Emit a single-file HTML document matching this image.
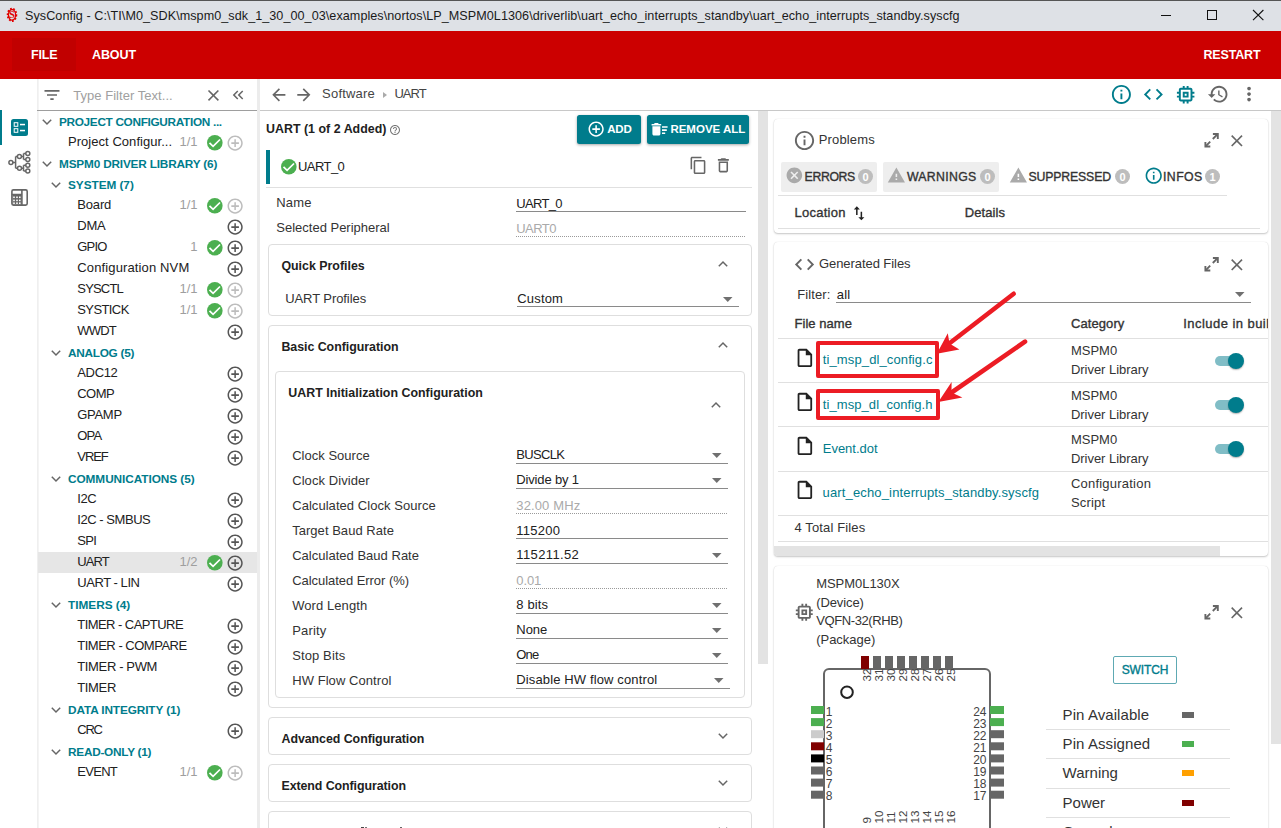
<!DOCTYPE html>
<html><head><meta charset="utf-8"><style>
html,body{margin:0;padding:0;width:1281px;height:828px;overflow:hidden;background:#fff;font-family:"Liberation Sans",sans-serif;}
.a{position:absolute;white-space:nowrap;}
svg.a{overflow:visible}
</style></head><body>
<div class="a" style="left:0px;top:0px;width:1281px;height:31px;background:#dee1e6"></div>
<div class="a" style="left:0px;top:0px;width:1281px;height:1px;background:#555"></div>
<svg class="a" style="left:6px;top:7px;" width="12" height="16" viewBox="0 0 12 16"><g fill="none" stroke="#e00000"><ellipse cx="6" cy="7.8" rx="4.3" ry="6.2" stroke-width="1.9" stroke-dasharray="1.7 1.5"/><ellipse cx="6" cy="7.8" rx="3.6" ry="5.3" stroke-width="1.3"/></g><text x="6" y="11.4" text-anchor="middle" font-family="Liberation Serif" font-size="10.5" fill="#e00000" font-weight="bold">S</text></svg>
<div class="a" style="left:25px;top:10.00px;font-size:12.6px;line-height:12.6px;font-weight:400;color:#1a1a1a;letter-spacing:0.058px;">SysConfig - C:\TI\M0_SDK\mspm0_sdk_1_30_00_03\examples\nortos\LP_MSPM0L1306\driverlib\uart_echo_interrupts_standby\uart_echo_interrupts_standby.syscfg</div>
<div class="a" style="left:1161px;top:15px;width:10px;height:1px;background:#111"></div>
<div class="a" style="left:1207px;top:10px;width:10px;height:10px;border:1.2px solid #111;box-sizing:border-box"></div>
<svg class="a" style="left:1252.8px;top:9.9px;" width="10.4" height="10.2" viewBox="0 0 10.4 10.2"><path d="M0 0L10.4 10.2M10.4 0L0 10.2" stroke="#111" stroke-width="1.1"/></svg>
<div class="a" style="left:0px;top:31px;width:1281px;height:48px;background:#cc0000"></div>
<div class="a" style="left:12px;top:38px;width:64px;height:33px;background:#c10000"></div>
<div class="a" style="left:31px;top:49.00px;font-size:12.5px;line-height:12.5px;font-weight:700;color:#fff;letter-spacing:-0.166px;">FILE</div>
<div class="a" style="left:92px;top:49.00px;font-size:12.5px;line-height:12.5px;font-weight:700;color:#fff;letter-spacing:-0.098px;">ABOUT</div>
<div class="a" style="left:1203.5px;top:49.00px;font-size:12.5px;line-height:12.5px;font-weight:700;color:#fff;letter-spacing:-0.169px;">RESTART</div>
<div class="a" style="left:0px;top:110px;width:2px;height:35px;background:#007c8c"></div>
<svg class="a" style="left:11px;top:119px;" width="17" height="17" viewBox="0 0 17 17"><rect x="0" y="0" width="17" height="17" rx="2.5" fill="#007c8c"/><rect x="3.2" y="3.7" width="3.6" height="3.6" fill="none" stroke="#fff" stroke-width="1"/><rect x="3.2" y="9.7" width="3.6" height="3.6" fill="none" stroke="#fff" stroke-width="1"/><rect x="9" y="4.8" width="5" height="1.5" fill="#fff"/><rect x="9" y="10.8" width="5" height="1.5" fill="#fff"/></svg>
<svg class="a" style="left:8px;top:150px;" width="24" height="24" viewBox="0 0 24 24"><g fill="none" stroke="#666" stroke-width="1.5"><circle cx="2.9" cy="12.4" r="2"/><circle cx="11.4" cy="6.6" r="2"/><circle cx="11.5" cy="18.2" r="2"/><circle cx="19.8" cy="3.6" r="2"/><circle cx="19.8" cy="9.5" r="2"/><circle cx="19.8" cy="15.3" r="2"/><circle cx="19.8" cy="20.9" r="2"/><path d="M4.9 12.4H7.6M7.6 6.6V18.2M7.6 6.6H9.4M7.6 18.2H9.5M13.4 6.6H15.5M15.5 3.6V9.5M15.5 3.6H17.8M15.5 9.5H17.8M13.5 18.2H15.5M15.5 15.3V20.9M15.5 15.3H17.8M15.5 20.9H17.8"/></g></svg>
<svg class="a" style="left:11px;top:189px;" width="17" height="17" viewBox="0 0 17 17"><rect x="1.5" y="6" width="9" height="9.5" fill="#666"/><g fill="#fff"><rect x="2.2" y="7.5" width="1.6" height="1.6"/><rect x="5.2" y="7.5" width="1.6" height="1.6"/><rect x="8" y="7.5" width="1.6" height="1.6"/><rect x="2.2" y="10.6" width="1.6" height="1.6"/><rect x="5.2" y="10.6" width="1.6" height="1.6"/><rect x="8" y="10.6" width="1.6" height="1.6"/><rect x="2.2" y="13.4" width="1.6" height="1.6"/><rect x="5.2" y="13.4" width="1.6" height="1.6"/><rect x="8" y="13.4" width="1.6" height="1.6"/></g><g fill="none" stroke="#666" stroke-width="1.6"><rect x="0.9" y="0.9" width="15.3" height="15.2" rx="1.5"/><path d="M10.9 0.9V16.1M0.9 5.5H10.9"/></g></svg>
<div class="a" style="left:37px;top:79px;width:2px;height:749px;background:linear-gradient(90deg,#ececec,#f7f7f7)"></div>
<div class="a" style="left:257px;top:79px;width:3px;height:749px;background:#ececec"></div>
<div class="a" style="left:37px;top:110px;width:220px;height:1px;background:#9e9e9e"></div>
<svg class="a" style="left:42.40px;top:85.20px;" width="19.99" height="19.99" viewBox="0 0 24 24"><path d="M10 18h4v-2h-4v2zM3 6v2h18V6H3zm3 7h12v-2H6v2z" fill="#666"/></svg>
<div class="a" style="left:73.2px;top:89.00px;font-size:13px;line-height:13px;font-weight:400;color:#a0a0a0;letter-spacing:0.042px;">Type Filter Text...</div>
<svg class="a" style="left:204.17px;top:86.07px;" width="18.86" height="18.86" viewBox="0 0 24 24"><path d="M19 6.41L17.59 5 12 10.59 6.41 5 5 6.41 10.59 12 5 17.59 6.41 19 12 13.41 17.59 19 19 17.59 13.41 12z" fill="#666"/></svg>
<svg class="a" style="left:229.30px;top:86.40px;" width="18.00" height="18.00" viewBox="0 0 24 24"><path d="M17.59 18L19 16.59 14.42 12 19 7.41 17.59 6l-6 6zM11 18l1.41-1.41L7.83 12l4.58-4.59L11 6l-6 6z" fill="#666"/></svg>
<svg class="a" style="left:42px;top:119px;" width="10" height="6" viewBox="0 0 10 6"><path d="M0.8 0.8L5 5L9.2 0.8" fill="none" stroke="#666" stroke-width="1.5"/></svg>
<div class="a" style="left:59px;top:117.00px;font-size:11.8px;line-height:11.8px;font-weight:700;color:#007c8c;letter-spacing:-0.322px;">PROJECT CONFIGURATION ...</div>
<div class="a" style="left:68px;top:135.00px;font-size:13px;line-height:13px;font-weight:400;color:#212121;letter-spacing:0.042px;">Project Configur...</div>
<div class="a" style="right:1083.5px;top:135.00px;font-size:13px;line-height:13px;color:#9e9e9e">1/1</div>
<svg class="a" style="left:206.6px;top:134.54999999999998px;" width="15.6" height="15.6" viewBox="0 0 15.6 15.6"><circle cx="7.8" cy="7.8" r="7.8" fill="#4caf50"/><path d="M2.50 7.80L6.10 11.30L13.00 4.50" fill="none" stroke="#fff" stroke-width="1.75"/></svg>
<svg class="a" style="left:226.28px;top:133.68px;" width="18.24" height="18.24" viewBox="0 0 24 24"><path d="M13 7h-2v4H7v2h4v4h2v-4h4v-2h-4V7zm-1-5C6.48 2 2 6.48 2 12s4.48 10 10 10 10-4.48 10-10S17.52 2 12 2zm0 18c-4.41 0-8-3.59-8-8s3.59-8 8-8 8 3.59 8 8-3.59 8-8 8z" fill="#bdbdbd"/></svg>
<svg class="a" style="left:42px;top:161px;" width="10" height="6" viewBox="0 0 10 6"><path d="M0.8 0.8L5 5L9.2 0.8" fill="none" stroke="#666" stroke-width="1.5"/></svg>
<div class="a" style="left:59px;top:159.00px;font-size:11.8px;line-height:11.8px;font-weight:700;color:#007c8c;letter-spacing:-0.183px;">MSPM0 DRIVER LIBRARY (6)</div>
<svg class="a" style="left:51px;top:182px;" width="10" height="6" viewBox="0 0 10 6"><path d="M0.8 0.8L5 5L9.2 0.8" fill="none" stroke="#666" stroke-width="1.5"/></svg>
<div class="a" style="left:68px;top:180.00px;font-size:11.8px;line-height:11.8px;font-weight:700;color:#007c8c;letter-spacing:-0.044px;">SYSTEM (7)</div>
<div class="a" style="left:77.3px;top:198.00px;font-size:13px;line-height:13px;font-weight:400;color:#212121;letter-spacing:-0.175px;">Board</div>
<div class="a" style="right:1083.5px;top:198.00px;font-size:13px;line-height:13px;color:#9e9e9e">1/1</div>
<svg class="a" style="left:206.6px;top:197.54999999999998px;" width="15.6" height="15.6" viewBox="0 0 15.6 15.6"><circle cx="7.8" cy="7.8" r="7.8" fill="#4caf50"/><path d="M2.50 7.80L6.10 11.30L13.00 4.50" fill="none" stroke="#fff" stroke-width="1.75"/></svg>
<svg class="a" style="left:226.28px;top:196.68px;" width="18.24" height="18.24" viewBox="0 0 24 24"><path d="M13 7h-2v4H7v2h4v4h2v-4h4v-2h-4V7zm-1-5C6.48 2 2 6.48 2 12s4.48 10 10 10 10-4.48 10-10S17.52 2 12 2zm0 18c-4.41 0-8-3.59-8-8s3.59-8 8-8 8 3.59 8 8-3.59 8-8 8z" fill="#bdbdbd"/></svg>
<div class="a" style="left:77.3px;top:219.00px;font-size:13px;line-height:13px;font-weight:400;color:#212121;letter-spacing:-0.235px;">DMA</div>
<svg class="a" style="left:226.28px;top:217.68px;" width="18.24" height="18.24" viewBox="0 0 24 24"><path d="M13 7h-2v4H7v2h4v4h2v-4h4v-2h-4V7zm-1-5C6.48 2 2 6.48 2 12s4.48 10 10 10 10-4.48 10-10S17.52 2 12 2zm0 18c-4.41 0-8-3.59-8-8s3.59-8 8-8 8 3.59 8 8-3.59 8-8 8z" fill="#555"/></svg>
<div class="a" style="left:77.3px;top:240.00px;font-size:13px;line-height:13px;font-weight:400;color:#212121;letter-spacing:-0.830px;">GPIO</div>
<div class="a" style="right:1083.5px;top:240.00px;font-size:13px;line-height:13px;color:#9e9e9e">1</div>
<svg class="a" style="left:206.6px;top:239.54999999999998px;" width="15.6" height="15.6" viewBox="0 0 15.6 15.6"><circle cx="7.8" cy="7.8" r="7.8" fill="#4caf50"/><path d="M2.50 7.80L6.10 11.30L13.00 4.50" fill="none" stroke="#fff" stroke-width="1.75"/></svg>
<svg class="a" style="left:226.28px;top:238.68px;" width="18.24" height="18.24" viewBox="0 0 24 24"><path d="M13 7h-2v4H7v2h4v4h2v-4h4v-2h-4V7zm-1-5C6.48 2 2 6.48 2 12s4.48 10 10 10 10-4.48 10-10S17.52 2 12 2zm0 18c-4.41 0-8-3.59-8-8s3.59-8 8-8 8 3.59 8 8-3.59 8-8 8z" fill="#555"/></svg>
<div class="a" style="left:77.3px;top:261.00px;font-size:13px;line-height:13px;font-weight:400;color:#212121;letter-spacing:0.132px;">Configuration NVM</div>
<svg class="a" style="left:226.28px;top:259.68px;" width="18.24" height="18.24" viewBox="0 0 24 24"><path d="M13 7h-2v4H7v2h4v4h2v-4h4v-2h-4V7zm-1-5C6.48 2 2 6.48 2 12s4.48 10 10 10 10-4.48 10-10S17.52 2 12 2zm0 18c-4.41 0-8-3.59-8-8s3.59-8 8-8 8 3.59 8 8-3.59 8-8 8z" fill="#555"/></svg>
<div class="a" style="left:77.3px;top:282.00px;font-size:13px;line-height:13px;font-weight:400;color:#212121;letter-spacing:-0.813px;">SYSCTL</div>
<div class="a" style="right:1083.5px;top:282.00px;font-size:13px;line-height:13px;color:#9e9e9e">1/1</div>
<svg class="a" style="left:206.6px;top:281.55px;" width="15.6" height="15.6" viewBox="0 0 15.6 15.6"><circle cx="7.8" cy="7.8" r="7.8" fill="#4caf50"/><path d="M2.50 7.80L6.10 11.30L13.00 4.50" fill="none" stroke="#fff" stroke-width="1.75"/></svg>
<svg class="a" style="left:226.28px;top:280.68px;" width="18.24" height="18.24" viewBox="0 0 24 24"><path d="M13 7h-2v4H7v2h4v4h2v-4h4v-2h-4V7zm-1-5C6.48 2 2 6.48 2 12s4.48 10 10 10 10-4.48 10-10S17.52 2 12 2zm0 18c-4.41 0-8-3.59-8-8s3.59-8 8-8 8 3.59 8 8-3.59 8-8 8z" fill="#bdbdbd"/></svg>
<div class="a" style="left:77.3px;top:303.00px;font-size:13px;line-height:13px;font-weight:400;color:#212121;letter-spacing:-0.604px;">SYSTICK</div>
<div class="a" style="right:1083.5px;top:303.00px;font-size:13px;line-height:13px;color:#9e9e9e">1/1</div>
<svg class="a" style="left:206.6px;top:302.55px;" width="15.6" height="15.6" viewBox="0 0 15.6 15.6"><circle cx="7.8" cy="7.8" r="7.8" fill="#4caf50"/><path d="M2.50 7.80L6.10 11.30L13.00 4.50" fill="none" stroke="#fff" stroke-width="1.75"/></svg>
<svg class="a" style="left:226.28px;top:301.68px;" width="18.24" height="18.24" viewBox="0 0 24 24"><path d="M13 7h-2v4H7v2h4v4h2v-4h4v-2h-4V7zm-1-5C6.48 2 2 6.48 2 12s4.48 10 10 10 10-4.48 10-10S17.52 2 12 2zm0 18c-4.41 0-8-3.59-8-8s3.59-8 8-8 8 3.59 8 8-3.59 8-8 8z" fill="#bdbdbd"/></svg>
<div class="a" style="left:77.3px;top:324.00px;font-size:13px;line-height:13px;font-weight:400;color:#212121;letter-spacing:-0.820px;">WWDT</div>
<svg class="a" style="left:226.28px;top:322.68px;" width="18.24" height="18.24" viewBox="0 0 24 24"><path d="M13 7h-2v4H7v2h4v4h2v-4h4v-2h-4V7zm-1-5C6.48 2 2 6.48 2 12s4.48 10 10 10 10-4.48 10-10S17.52 2 12 2zm0 18c-4.41 0-8-3.59-8-8s3.59-8 8-8 8 3.59 8 8-3.59 8-8 8z" fill="#555"/></svg>
<svg class="a" style="left:51px;top:350px;" width="10" height="6" viewBox="0 0 10 6"><path d="M0.8 0.8L5 5L9.2 0.8" fill="none" stroke="#666" stroke-width="1.5"/></svg>
<div class="a" style="left:68px;top:348.00px;font-size:11.8px;line-height:11.8px;font-weight:700;color:#007c8c;letter-spacing:-0.266px;">ANALOG (5)</div>
<div class="a" style="left:77.3px;top:366.00px;font-size:13px;line-height:13px;font-weight:400;color:#212121;letter-spacing:-0.357px;">ADC12</div>
<svg class="a" style="left:226.28px;top:364.68px;" width="18.24" height="18.24" viewBox="0 0 24 24"><path d="M13 7h-2v4H7v2h4v4h2v-4h4v-2h-4V7zm-1-5C6.48 2 2 6.48 2 12s4.48 10 10 10 10-4.48 10-10S17.52 2 12 2zm0 18c-4.41 0-8-3.59-8-8s3.59-8 8-8 8 3.59 8 8-3.59 8-8 8z" fill="#555"/></svg>
<div class="a" style="left:77.3px;top:387.00px;font-size:13px;line-height:13px;font-weight:400;color:#212121;letter-spacing:-0.571px;">COMP</div>
<svg class="a" style="left:226.28px;top:385.68px;" width="18.24" height="18.24" viewBox="0 0 24 24"><path d="M13 7h-2v4H7v2h4v4h2v-4h4v-2h-4V7zm-1-5C6.48 2 2 6.48 2 12s4.48 10 10 10 10-4.48 10-10S17.52 2 12 2zm0 18c-4.41 0-8-3.59-8-8s3.59-8 8-8 8 3.59 8 8-3.59 8-8 8z" fill="#555"/></svg>
<div class="a" style="left:77.3px;top:408.00px;font-size:13px;line-height:13px;font-weight:400;color:#212121;letter-spacing:-0.309px;">GPAMP</div>
<svg class="a" style="left:226.28px;top:406.68px;" width="18.24" height="18.24" viewBox="0 0 24 24"><path d="M13 7h-2v4H7v2h4v4h2v-4h4v-2h-4V7zm-1-5C6.48 2 2 6.48 2 12s4.48 10 10 10 10-4.48 10-10S17.52 2 12 2zm0 18c-4.41 0-8-3.59-8-8s3.59-8 8-8 8 3.59 8 8-3.59 8-8 8z" fill="#555"/></svg>
<div class="a" style="left:77.3px;top:429.00px;font-size:13px;line-height:13px;font-weight:400;color:#212121;letter-spacing:-0.796px;">OPA</div>
<svg class="a" style="left:226.28px;top:427.68px;" width="18.24" height="18.24" viewBox="0 0 24 24"><path d="M13 7h-2v4H7v2h4v4h2v-4h4v-2h-4V7zm-1-5C6.48 2 2 6.48 2 12s4.48 10 10 10 10-4.48 10-10S17.52 2 12 2zm0 18c-4.41 0-8-3.59-8-8s3.59-8 8-8 8 3.59 8 8-3.59 8-8 8z" fill="#555"/></svg>
<div class="a" style="left:77.3px;top:450.00px;font-size:13px;line-height:13px;font-weight:400;color:#212121;letter-spacing:-1.078px;">VREF</div>
<svg class="a" style="left:226.28px;top:448.68px;" width="18.24" height="18.24" viewBox="0 0 24 24"><path d="M13 7h-2v4H7v2h4v4h2v-4h4v-2h-4V7zm-1-5C6.48 2 2 6.48 2 12s4.48 10 10 10 10-4.48 10-10S17.52 2 12 2zm0 18c-4.41 0-8-3.59-8-8s3.59-8 8-8 8 3.59 8 8-3.59 8-8 8z" fill="#555"/></svg>
<svg class="a" style="left:51px;top:476px;" width="10" height="6" viewBox="0 0 10 6"><path d="M0.8 0.8L5 5L9.2 0.8" fill="none" stroke="#666" stroke-width="1.5"/></svg>
<div class="a" style="left:68px;top:474.00px;font-size:11.8px;line-height:11.8px;font-weight:700;color:#007c8c;letter-spacing:-0.052px;">COMMUNICATIONS (5)</div>
<div class="a" style="left:77.3px;top:492.00px;font-size:13px;line-height:13px;font-weight:400;color:#212121;letter-spacing:-0.412px;">I2C</div>
<svg class="a" style="left:226.28px;top:490.68px;" width="18.24" height="18.24" viewBox="0 0 24 24"><path d="M13 7h-2v4H7v2h4v4h2v-4h4v-2h-4V7zm-1-5C6.48 2 2 6.48 2 12s4.48 10 10 10 10-4.48 10-10S17.52 2 12 2zm0 18c-4.41 0-8-3.59-8-8s3.59-8 8-8 8 3.59 8 8-3.59 8-8 8z" fill="#555"/></svg>
<div class="a" style="left:77.3px;top:513.00px;font-size:13px;line-height:13px;font-weight:400;color:#212121;letter-spacing:-0.458px;">I2C - SMBUS</div>
<svg class="a" style="left:226.28px;top:511.68px;" width="18.24" height="18.24" viewBox="0 0 24 24"><path d="M13 7h-2v4H7v2h4v4h2v-4h4v-2h-4V7zm-1-5C6.48 2 2 6.48 2 12s4.48 10 10 10 10-4.48 10-10S17.52 2 12 2zm0 18c-4.41 0-8-3.59-8-8s3.59-8 8-8 8 3.59 8 8-3.59 8-8 8z" fill="#555"/></svg>
<div class="a" style="left:77.3px;top:534.00px;font-size:13px;line-height:13px;font-weight:400;color:#212121;letter-spacing:-0.702px;">SPI</div>
<svg class="a" style="left:226.28px;top:532.68px;" width="18.24" height="18.24" viewBox="0 0 24 24"><path d="M13 7h-2v4H7v2h4v4h2v-4h4v-2h-4V7zm-1-5C6.48 2 2 6.48 2 12s4.48 10 10 10 10-4.48 10-10S17.52 2 12 2zm0 18c-4.41 0-8-3.59-8-8s3.59-8 8-8 8 3.59 8 8-3.59 8-8 8z" fill="#555"/></svg>
<div class="a" style="left:38px;top:552px;width:219px;height:21px;background:#e6e6e6"></div>
<div class="a" style="left:77.3px;top:555.00px;font-size:13px;line-height:13px;font-weight:400;color:#212121;letter-spacing:-0.958px;">UART</div>
<div class="a" style="right:1083.5px;top:555.00px;font-size:13px;line-height:13px;color:#9e9e9e">1/2</div>
<svg class="a" style="left:206.6px;top:554.5500000000001px;" width="15.6" height="15.6" viewBox="0 0 15.6 15.6"><circle cx="7.8" cy="7.8" r="7.8" fill="#4caf50"/><path d="M2.50 7.80L6.10 11.30L13.00 4.50" fill="none" stroke="#fff" stroke-width="1.75"/></svg>
<svg class="a" style="left:226.28px;top:553.68px;" width="18.24" height="18.24" viewBox="0 0 24 24"><path d="M13 7h-2v4H7v2h4v4h2v-4h4v-2h-4V7zm-1-5C6.48 2 2 6.48 2 12s4.48 10 10 10 10-4.48 10-10S17.52 2 12 2zm0 18c-4.41 0-8-3.59-8-8s3.59-8 8-8 8 3.59 8 8-3.59 8-8 8z" fill="#555"/></svg>
<div class="a" style="left:77.3px;top:576.00px;font-size:13px;line-height:13px;font-weight:400;color:#212121;letter-spacing:-0.452px;">UART - LIN</div>
<svg class="a" style="left:226.28px;top:574.68px;" width="18.24" height="18.24" viewBox="0 0 24 24"><path d="M13 7h-2v4H7v2h4v4h2v-4h4v-2h-4V7zm-1-5C6.48 2 2 6.48 2 12s4.48 10 10 10 10-4.48 10-10S17.52 2 12 2zm0 18c-4.41 0-8-3.59-8-8s3.59-8 8-8 8 3.59 8 8-3.59 8-8 8z" fill="#555"/></svg>
<svg class="a" style="left:51px;top:602px;" width="10" height="6" viewBox="0 0 10 6"><path d="M0.8 0.8L5 5L9.2 0.8" fill="none" stroke="#666" stroke-width="1.5"/></svg>
<div class="a" style="left:68px;top:600.00px;font-size:11.8px;line-height:11.8px;font-weight:700;color:#007c8c;letter-spacing:0.002px;">TIMERS (4)</div>
<div class="a" style="left:77.3px;top:618.00px;font-size:13px;line-height:13px;font-weight:400;color:#212121;letter-spacing:-0.559px;">TIMER - CAPTURE</div>
<svg class="a" style="left:226.28px;top:616.68px;" width="18.24" height="18.24" viewBox="0 0 24 24"><path d="M13 7h-2v4H7v2h4v4h2v-4h4v-2h-4V7zm-1-5C6.48 2 2 6.48 2 12s4.48 10 10 10 10-4.48 10-10S17.52 2 12 2zm0 18c-4.41 0-8-3.59-8-8s3.59-8 8-8 8 3.59 8 8-3.59 8-8 8z" fill="#555"/></svg>
<div class="a" style="left:77.3px;top:639.00px;font-size:13px;line-height:13px;font-weight:400;color:#212121;letter-spacing:-0.494px;">TIMER - COMPARE</div>
<svg class="a" style="left:226.28px;top:637.68px;" width="18.24" height="18.24" viewBox="0 0 24 24"><path d="M13 7h-2v4H7v2h4v4h2v-4h4v-2h-4V7zm-1-5C6.48 2 2 6.48 2 12s4.48 10 10 10 10-4.48 10-10S17.52 2 12 2zm0 18c-4.41 0-8-3.59-8-8s3.59-8 8-8 8 3.59 8 8-3.59 8-8 8z" fill="#555"/></svg>
<div class="a" style="left:77.3px;top:660.00px;font-size:13px;line-height:13px;font-weight:400;color:#212121;letter-spacing:-0.368px;">TIMER - PWM</div>
<svg class="a" style="left:226.28px;top:658.68px;" width="18.24" height="18.24" viewBox="0 0 24 24"><path d="M13 7h-2v4H7v2h4v4h2v-4h4v-2h-4V7zm-1-5C6.48 2 2 6.48 2 12s4.48 10 10 10 10-4.48 10-10S17.52 2 12 2zm0 18c-4.41 0-8-3.59-8-8s3.59-8 8-8 8 3.59 8 8-3.59 8-8 8z" fill="#555"/></svg>
<div class="a" style="left:77.3px;top:681.00px;font-size:13px;line-height:13px;font-weight:400;color:#212121;letter-spacing:-0.364px;">TIMER</div>
<svg class="a" style="left:226.28px;top:679.68px;" width="18.24" height="18.24" viewBox="0 0 24 24"><path d="M13 7h-2v4H7v2h4v4h2v-4h4v-2h-4V7zm-1-5C6.48 2 2 6.48 2 12s4.48 10 10 10 10-4.48 10-10S17.52 2 12 2zm0 18c-4.41 0-8-3.59-8-8s3.59-8 8-8 8 3.59 8 8-3.59 8-8 8z" fill="#555"/></svg>
<svg class="a" style="left:51px;top:707px;" width="10" height="6" viewBox="0 0 10 6"><path d="M0.8 0.8L5 5L9.2 0.8" fill="none" stroke="#666" stroke-width="1.5"/></svg>
<div class="a" style="left:68px;top:705.00px;font-size:11.8px;line-height:11.8px;font-weight:700;color:#007c8c;letter-spacing:-0.113px;">DATA INTEGRITY (1)</div>
<div class="a" style="left:77.3px;top:723.00px;font-size:13px;line-height:13px;font-weight:400;color:#212121;letter-spacing:-1.306px;">CRC</div>
<svg class="a" style="left:226.28px;top:721.68px;" width="18.24" height="18.24" viewBox="0 0 24 24"><path d="M13 7h-2v4H7v2h4v4h2v-4h4v-2h-4V7zm-1-5C6.48 2 2 6.48 2 12s4.48 10 10 10 10-4.48 10-10S17.52 2 12 2zm0 18c-4.41 0-8-3.59-8-8s3.59-8 8-8 8 3.59 8 8-3.59 8-8 8z" fill="#555"/></svg>
<svg class="a" style="left:51px;top:749px;" width="10" height="6" viewBox="0 0 10 6"><path d="M0.8 0.8L5 5L9.2 0.8" fill="none" stroke="#666" stroke-width="1.5"/></svg>
<div class="a" style="left:68px;top:747.00px;font-size:11.8px;line-height:11.8px;font-weight:700;color:#007c8c;letter-spacing:-0.252px;">READ-ONLY (1)</div>
<div class="a" style="left:77.3px;top:765.00px;font-size:13px;line-height:13px;font-weight:400;color:#212121;letter-spacing:-0.721px;">EVENT</div>
<div class="a" style="right:1083.5px;top:765.00px;font-size:13px;line-height:13px;color:#9e9e9e">1/1</div>
<svg class="a" style="left:206.6px;top:764.5500000000001px;" width="15.6" height="15.6" viewBox="0 0 15.6 15.6"><circle cx="7.8" cy="7.8" r="7.8" fill="#4caf50"/><path d="M2.50 7.80L6.10 11.30L13.00 4.50" fill="none" stroke="#fff" stroke-width="1.75"/></svg>
<svg class="a" style="left:226.28px;top:763.68px;" width="18.24" height="18.24" viewBox="0 0 24 24"><path d="M13 7h-2v4H7v2h4v4h2v-4h4v-2h-4V7zm-1-5C6.48 2 2 6.48 2 12s4.48 10 10 10 10-4.48 10-10S17.52 2 12 2zm0 18c-4.41 0-8-3.59-8-8s3.59-8 8-8 8 3.59 8 8-3.59 8-8 8z" fill="#bdbdbd"/></svg>
<div class="a" style="left:260px;top:110px;width:1021px;height:1px;background:#c8c8c8"></div>
<svg class="a" style="left:268.80px;top:84.60px;" width="19.68" height="19.68" viewBox="0 0 24 24"><path d="M20 11H7.83l5.59-5.59L12 4l-8 8 8 8 1.41-1.41L7.83 13H20v-2z" fill="#666"/></svg>
<svg class="a" style="left:293.50px;top:84.60px;" width="19.68" height="19.68" viewBox="0 0 24 24"><path d="M12 4l-1.41 1.41L16.17 11H4v2h12.17l-5.58 5.59L12 20l8-8z" fill="#666"/></svg>
<div class="a" style="left:322.1px;top:87.00px;font-size:13px;line-height:13px;font-weight:400;color:#444;letter-spacing:0.200px;">Software</div>
<svg class="a" style="left:383px;top:91.5px;" width="5" height="6" viewBox="0 0 5 6"><path d="M0 0L4 3L0 6Z" fill="#aaa"/></svg>
<div class="a" style="left:394.4px;top:87.00px;font-size:13px;line-height:13px;font-weight:400;color:#444;letter-spacing:-0.958px;">UART</div>
<svg class="a" style="left:1110.00px;top:83.00px;" width="22.80" height="22.80" viewBox="0 0 24 24"><path d="M11 7h2v2h-2zm0 4h2v6h-2zm1-9C6.48 2 2 6.48 2 12s4.48 10 10 10 10-4.48 10-10S17.52 2 12 2zm0 18c-4.41 0-8-3.59-8-8s3.59-8 8-8 8 3.59 8 8-3.59 8-8 8z" fill="#007c8c"/></svg>
<svg class="a" style="left:1142.10px;top:83.30px;" width="22.80" height="22.80" viewBox="0 0 24 24"><path d="M9.4 16.6L4.8 12l4.6-4.6L8 6l-6 6 6 6 1.4-1.4zm5.2 0l4.6-4.6-4.6-4.6L16 6l6 6-6 6-1.4-1.4z" fill="#007c8c"/></svg>
<svg class="a" style="left:1174.00px;top:82.80px;" width="23.33" height="23.33" viewBox="0 0 24 24"><path d="M15 9H9v6h6V9zm-2 4h-2v-2h2v2zm8-2V9h-2V7c0-1.1-.9-2-2-2h-2V3h-2v2h-2V3H9v2H7c-1.1 0-2 .9-2 2v2H3v2h2v2H3v2h2v2c0 1.1.9 2 2 2h2v2h2v-2h2v2h2v-2h2c1.1 0 2-.9 2-2v-2h2v-2h-2v-2h2zm-4 6H7V7h10v10z" fill="#007c8c"/></svg>
<svg class="a" style="left:1206.80px;top:83.00px;" width="22.32" height="22.32" viewBox="0 0 24 24"><path d="M13 3c-4.97 0-9 4.03-9 9H1l3.89 3.89.07.14L9 12H6c0-3.87 3.13-7 7-7s7 3.13 7 7-3.13 7-7 7c-1.93 0-3.68-.79-4.94-2.06l-1.42 1.42C8.27 19.99 10.51 21 13 21c4.97 0 9-4.03 9-9s-4.03-9-9-9zm-1 5v5l4.28 2.54.72-1.21-3.5-2.08V8H12z" fill="#666"/></svg>
<svg class="a" style="left:1238.30px;top:83.30px;" width="22.08" height="22.08" viewBox="0 0 24 24"><path d="M12 8c1.1 0 2-.9 2-2s-.9-2-2-2-2 .9-2 2 .9 2 2 2zm0 2c-1.1 0-2 .9-2 2s.9 2 2 2 2-.9 2-2-.9-2-2-2zm0 6c-1.1 0-2 .9-2 2s.9 2 2 2 2-.9 2-2-.9-2-2-2z" fill="#666"/></svg>
<div class="a" style="left:266px;top:123.00px;font-size:12.4px;line-height:12.4px;font-weight:700;color:#212121;letter-spacing:0.023px;">UART (1 of 2 Added)</div>
<svg class="a" style="left:388.50px;top:124.00px;" width="12.00" height="12.00" viewBox="0 0 24 24"><path d="M11 18h2v-2h-2v2zm1-16C6.48 2 2 6.48 2 12s4.48 10 10 10 10-4.48 10-10S17.52 2 12 2zm0 18c-4.41 0-8-3.59-8-8s3.59-8 8-8 8 3.59 8 8-3.59 8-8 8zm0-14c-2.21 0-4 1.79-4 4h2c0-1.1.9-2 2-2s2 .9 2 2c0 2-3 1.75-3 5h2c0-2.25 3-2.5 3-5 0-2.21-1.79-4-4-4z" fill="#777"/></svg>
<div class="a" style="left:577px;top:115px;width:64px;height:29px;background:#007c8c;border-radius:2.5px;box-shadow:0 1px 3px rgba(0,0,0,0.35)"></div>
<svg class="a" style="left:587.38px;top:120.08px;" width="18.24" height="18.24" viewBox="0 0 24 24"><path d="M13 7h-2v4H7v2h4v4h2v-4h4v-2h-4V7zm-1-5C6.48 2 2 6.48 2 12s4.48 10 10 10 10-4.48 10-10S17.52 2 12 2zm0 18c-4.41 0-8-3.59-8-8s3.59-8 8-8 8 3.59 8 8-3.59 8-8 8z" fill="#fff"/></svg>
<div class="a" style="left:607.2px;top:124.00px;font-size:11.5px;line-height:11.5px;font-weight:700;color:#fff;letter-spacing:-0.166px;">ADD</div>
<div class="a" style="left:647px;top:115px;width:102px;height:29px;background:#007c8c;border-radius:2.5px;box-shadow:0 1px 3px rgba(0,0,0,0.35)"></div>
<svg class="a" style="left:649.9px;top:120.1px" width="19.2" height="18.7" viewBox="0 0 24 24" preserveAspectRatio="none"><path d="M15 16h4v2h-4zm0-8h7v2h-7zm0 4h6v2h-6zM3 18c0 1.1.9 2 2 2h6c1.1 0 2-.9 2-2V8H3v10zM14 5h-3l-1-1H6L5 5H2v2h12z" fill="#fff"/></svg>
<div class="a" style="left:670.4px;top:124.00px;font-size:11.5px;line-height:11.5px;font-weight:700;color:#fff;letter-spacing:0.004px;">REMOVE ALL</div>
<div class="a" style="left:266px;top:150px;width:4px;height:34px;background:#007c8c"></div>
<svg class="a" style="left:280.59999999999997px;top:158.79999999999998px;" width="15.6" height="15.6" viewBox="0 0 15.6 15.6"><circle cx="7.8" cy="7.8" r="7.8" fill="#4caf50"/><path d="M2.50 7.80L6.10 11.30L13.00 4.50" fill="none" stroke="#fff" stroke-width="1.75"/></svg>
<div class="a" style="left:298px;top:160.00px;font-size:13px;line-height:13px;font-weight:400;color:#212121;letter-spacing:-0.566px;">UART_0</div>
<svg class="a" style="left:688.90px;top:155.90px;" width="18.72" height="18.72" viewBox="0 0 24 24"><path d="M16 1H4c-1.1 0-2 .9-2 2v14h2V3h12V1zm3 4H8c-1.1 0-2 .9-2 2v14c0 1.1.9 2 2 2h11c1.1 0 2-.9 2-2V7c0-1.1-.9-2-2-2zm0 16H8V7h11v14z" fill="#666"/></svg>
<svg class="a" style="left:714.30px;top:156.00px;" width="18.72" height="18.72" viewBox="0 0 24 24"><path d="M6 19c0 1.1.9 2 2 2h8c1.1 0 2-.9 2-2V7H6v12zM8 9h8v10H8V9zm7.5-5l-1-1h-5l-1 1H5v2h14V4z" fill="#666"/></svg>
<div class="a" style="left:266px;top:187px;width:486px;height:1px;background:#e0e0e0"></div>
<div class="a" style="left:276.3px;top:196.00px;font-size:13px;line-height:13px;font-weight:400;color:#333;letter-spacing:0.178px;">Name</div>
<div class="a" style="left:516px;top:211px;width:230px;height:1px;background:#8a8a8a"></div>
<div class="a" style="left:516.3px;top:197.00px;font-size:13px;line-height:13px;font-weight:400;color:#212121;letter-spacing:-0.675px;">UART_0</div>
<div class="a" style="left:276.3px;top:221.00px;font-size:13px;line-height:13px;font-weight:400;color:#333;letter-spacing:-0.003px;">Selected Peripheral</div>
<div class="a" style="left:516px;top:236px;width:230px;height:1px;background:repeating-linear-gradient(90deg,#9a9a9a 0 1px,transparent 1px 2px)"></div>
<div class="a" style="left:516.3px;top:222.00px;font-size:13px;line-height:13px;font-weight:400;color:#aaa;letter-spacing:-0.574px;">UART0</div>
<div class="a" style="left:268px;top:244px;width:484px;height:72px;border:1px solid #dedede;border-radius:4px;box-sizing:border-box;background:#fff"></div>
<div class="a" style="left:281.4px;top:260.00px;font-size:12.4px;line-height:12.4px;font-weight:700;color:#212121;letter-spacing:0.001px;">Quick Profiles</div>
<svg class="a" style="left:718px;top:261px;" width="10" height="6" viewBox="0 0 10 6"><path d="M0.8 5.2L5 1L9.2 5.2" fill="none" stroke="#666" stroke-width="1.5"/></svg>
<div class="a" style="left:285.2px;top:292.00px;font-size:13px;line-height:13px;font-weight:400;color:#333;letter-spacing:-0.078px;">UART Profiles</div>
<div class="a" style="left:517px;top:306px;width:222px;height:1px;background:#8a8a8a"></div>
<div class="a" style="left:517.3px;top:292.00px;font-size:13px;line-height:13px;font-weight:400;color:#212121;letter-spacing:0.166px;">Custom</div>
<svg class="a" style="left:722.8px;top:296.5px;" width="10" height="5" viewBox="0 0 10 5"><path d="M0 0H9.5L4.75 5Z" fill="#707070"/></svg>
<div class="a" style="left:268px;top:325px;width:484px;height:383px;border:1px solid #dedede;border-radius:4px;box-sizing:border-box;background:#fff"></div>
<div class="a" style="left:281.4px;top:341.00px;font-size:12.4px;line-height:12.4px;font-weight:700;color:#212121;letter-spacing:-0.032px;">Basic Configuration</div>
<svg class="a" style="left:718px;top:342px;" width="10" height="6" viewBox="0 0 10 6"><path d="M0.8 5.2L5 1L9.2 5.2" fill="none" stroke="#666" stroke-width="1.5"/></svg>
<div class="a" style="left:275px;top:371px;width:470px;height:327px;border:1px solid #dedede;border-radius:4px;box-sizing:border-box;background:#fff"></div>
<div class="a" style="left:288.3px;top:387.00px;font-size:12.4px;line-height:12.4px;font-weight:700;color:#212121;letter-spacing:0.014px;">UART Initialization Configuration</div>
<svg class="a" style="left:711px;top:401.5px;" width="10" height="6" viewBox="0 0 10 6"><path d="M0.8 5.2L5 1L9.2 5.2" fill="none" stroke="#666" stroke-width="1.5"/></svg>
<div class="a" style="left:292.2px;top:449.00px;font-size:13px;line-height:13px;font-weight:400;color:#333;letter-spacing:0.017px;">Clock Source</div>
<div class="a" style="left:516px;top:463px;width:212px;height:1px;background:#8a8a8a"></div>
<div class="a" style="left:516.3px;top:448.00px;font-size:13px;line-height:13px;font-weight:400;color:#212121;letter-spacing:-0.695px;">BUSCLK</div>
<svg class="a" style="left:712px;top:452.5px;" width="10" height="5" viewBox="0 0 10 5"><path d="M0 0H9.5L4.75 5Z" fill="#707070"/></svg>
<div class="a" style="left:292.2px;top:474.00px;font-size:13px;line-height:13px;font-weight:400;color:#333;letter-spacing:0.074px;">Clock Divider</div>
<div class="a" style="left:516px;top:488px;width:212px;height:1px;background:#8a8a8a"></div>
<div class="a" style="left:516.3px;top:473.00px;font-size:13px;line-height:13px;font-weight:400;color:#212121;letter-spacing:-0.153px;">Divide by 1</div>
<svg class="a" style="left:712px;top:477.5px;" width="10" height="5" viewBox="0 0 10 5"><path d="M0 0H9.5L4.75 5Z" fill="#707070"/></svg>
<div class="a" style="left:292.2px;top:499.00px;font-size:13px;line-height:13px;font-weight:400;color:#333;letter-spacing:0.052px;">Calculated Clock Source</div>
<div class="a" style="left:516px;top:513px;width:212px;height:1px;background:repeating-linear-gradient(90deg,#9a9a9a 0 1px,transparent 1px 2px)"></div>
<div class="a" style="left:516.3px;top:499.00px;font-size:13px;line-height:13px;font-weight:400;color:#aaa;letter-spacing:0.123px;">32.00 MHz</div>
<div class="a" style="left:292.2px;top:524.00px;font-size:13px;line-height:13px;font-weight:400;color:#333;letter-spacing:0.034px;">Target Baud Rate</div>
<div class="a" style="left:516px;top:538px;width:212px;height:1px;background:#8a8a8a"></div>
<div class="a" style="left:516.3px;top:524.00px;font-size:13px;line-height:13px;font-weight:400;color:#212121;letter-spacing:0.253px;">115200</div>
<div class="a" style="left:292.2px;top:549.00px;font-size:13px;line-height:13px;font-weight:400;color:#333;letter-spacing:0.017px;">Calculated Baud Rate</div>
<div class="a" style="left:516px;top:563px;width:212px;height:1px;background:#8a8a8a"></div>
<div class="a" style="left:516.3px;top:548.00px;font-size:13px;line-height:13px;font-weight:400;color:#212121;letter-spacing:0.375px;">115211.52</div>
<svg class="a" style="left:712px;top:552.5px;" width="10" height="5" viewBox="0 0 10 5"><path d="M0 0H9.5L4.75 5Z" fill="#707070"/></svg>
<div class="a" style="left:292.2px;top:574.00px;font-size:13px;line-height:13px;font-weight:400;color:#333;letter-spacing:-0.049px;">Calculated Error (%)</div>
<div class="a" style="left:516px;top:588px;width:212px;height:1px;background:repeating-linear-gradient(90deg,#9a9a9a 0 1px,transparent 1px 2px)"></div>
<div class="a" style="left:516.3px;top:574.00px;font-size:13px;line-height:13px;font-weight:400;color:#aaa;letter-spacing:-0.085px;">0.01</div>
<div class="a" style="left:292.2px;top:599.00px;font-size:13px;line-height:13px;font-weight:400;color:#333;letter-spacing:0.077px;">Word Length</div>
<div class="a" style="left:516px;top:613px;width:212px;height:1px;background:#8a8a8a"></div>
<div class="a" style="left:516.3px;top:598.00px;font-size:13px;line-height:13px;font-weight:400;color:#212121;letter-spacing:0.151px;">8 bits</div>
<svg class="a" style="left:712px;top:602.5px;" width="10" height="5" viewBox="0 0 10 5"><path d="M0 0H9.5L4.75 5Z" fill="#707070"/></svg>
<div class="a" style="left:292.2px;top:624.00px;font-size:13px;line-height:13px;font-weight:400;color:#333;letter-spacing:0.158px;">Parity</div>
<div class="a" style="left:516px;top:638px;width:212px;height:1px;background:#8a8a8a"></div>
<div class="a" style="left:516.3px;top:623.00px;font-size:13px;line-height:13px;font-weight:400;color:#212121;letter-spacing:-0.022px;">None</div>
<svg class="a" style="left:712px;top:627.5px;" width="10" height="5" viewBox="0 0 10 5"><path d="M0 0H9.5L4.75 5Z" fill="#707070"/></svg>
<div class="a" style="left:292.2px;top:649.00px;font-size:13px;line-height:13px;font-weight:400;color:#333;letter-spacing:0.115px;">Stop Bits</div>
<div class="a" style="left:516px;top:663px;width:212px;height:1px;background:#8a8a8a"></div>
<div class="a" style="left:516.3px;top:648.00px;font-size:13px;line-height:13px;font-weight:400;color:#212121;letter-spacing:-0.828px;">One</div>
<svg class="a" style="left:712px;top:652.5px;" width="10" height="5" viewBox="0 0 10 5"><path d="M0 0H9.5L4.75 5Z" fill="#707070"/></svg>
<div class="a" style="left:292.2px;top:674.00px;font-size:13px;line-height:13px;font-weight:400;color:#333;letter-spacing:0.067px;">HW Flow Control</div>
<div class="a" style="left:516px;top:688px;width:214px;height:1px;background:#8a8a8a"></div>
<div class="a" style="left:516.3px;top:673.00px;font-size:13px;line-height:13px;font-weight:400;color:#212121;letter-spacing:0.130px;">Disable HW flow control</div>
<svg class="a" style="left:713.5px;top:677.5px;" width="10" height="5" viewBox="0 0 10 5"><path d="M0 0H9.5L4.75 5Z" fill="#707070"/></svg>
<div class="a" style="left:268px;top:717px;width:484px;height:38px;border:1px solid #dedede;border-radius:4px;box-sizing:border-box;background:#fff"></div>
<div class="a" style="left:281.5px;top:733.00px;font-size:12.4px;line-height:12.4px;font-weight:700;color:#212121;letter-spacing:-0.050px;">Advanced Configuration</div>
<svg class="a" style="left:718px;top:733px;" width="10" height="6" viewBox="0 0 10 6"><path d="M0.8 0.8L5 5L9.2 0.8" fill="none" stroke="#666" stroke-width="1.5"/></svg>
<div class="a" style="left:268px;top:764px;width:484px;height:38px;border:1px solid #dedede;border-radius:4px;box-sizing:border-box;background:#fff"></div>
<div class="a" style="left:281.5px;top:780.00px;font-size:12.4px;line-height:12.4px;font-weight:700;color:#212121;letter-spacing:-0.079px;">Extend Configuration</div>
<svg class="a" style="left:718px;top:780px;" width="10" height="6" viewBox="0 0 10 6"><path d="M0.8 0.8L5 5L9.2 0.8" fill="none" stroke="#666" stroke-width="1.5"/></svg>
<div class="a" style="left:268px;top:811px;width:484px;height:40px;border:1px solid #dedede;border-radius:4px;box-sizing:border-box;background:#fff"></div>
<div class="a" style="left:361px;top:827px;width:3px;height:1px;background:#444"></div>
<div class="a" style="left:365px;top:827px;width:2px;height:1px;background:#777"></div>
<div class="a" style="left:400px;top:827px;width:2px;height:1px;background:#666"></div>
<svg class="a" style="left:718px;top:827px;" width="10" height="6" viewBox="0 0 10 6"><path d="M0.8 0.8L5 5L9.2 0.8" fill="none" stroke="#666" stroke-width="1.5"/></svg>
<div class="a" style="left:758px;top:111px;width:10px;height:553px;background:#e3e3e3"></div>
<div class="a" style="left:1271px;top:111px;width:10px;height:633px;background:#e3e3e3"></div>
<div class="a" style="left:774px;top:119px;width:494px;height:114px;background:#fff;border-radius:4px;box-shadow:0 1px 2px rgba(0,0,0,0.22),0 0 1px rgba(0,0,0,0.15)"></div>
<svg class="a" style="left:792.78px;top:128.78px;" width="23.04" height="23.04" viewBox="0 0 24 24"><path d="M11 7h2v2h-2zm0 4h2v6h-2zm1-9C6.48 2 2 6.48 2 12s4.48 10 10 10 10-4.48 10-10S17.52 2 12 2zm0 18c-4.41 0-8-3.59-8-8s3.59-8 8-8 8 3.59 8 8-3.59 8-8 8z" fill="#666"/></svg>
<div class="a" style="left:818.8px;top:133.00px;font-size:13px;line-height:13px;font-weight:400;color:#333;letter-spacing:0.133px;">Problems</div>
<svg class="a" style="left:1204.2px;top:133px;" width="15" height="15" viewBox="0 0 15 15"><g fill="none" stroke="#666" stroke-width="1.9"><path d="M8.9 1H13.8V6.1M1.4 8.9V13.5H6.3"/><path d="M13.6 1.2L8.8 6M1.6 13.3L6.2 8.7"/></g></svg>
<svg class="a" style="left:1226.89px;top:130.89px;" width="19.71" height="19.71" viewBox="0 0 24 24"><path d="M19 6.41L17.59 5 12 10.59 6.41 5 5 6.41 10.59 12 5 17.59 6.41 19 12 13.41 17.59 19 19 17.59 13.41 12z" fill="#666"/></svg>
<div class="a" style="left:781px;top:162px;width:96px;height:30px;background:#eeeeee;border-radius:2px"></div>
<div class="a" style="left:883px;top:162px;width:116px;height:30px;background:#eeeeee;border-radius:2px"></div>
<svg class="a" style="left:785.04px;top:166.34px;" width="18.72" height="18.72" viewBox="0 0 24 24"><path d="M12 2C6.47 2 2 6.47 2 12s4.47 10 10 10 10-4.47 10-10S17.53 2 12 2zm5 13.59L15.59 17 12 13.41 8.41 17 7 15.59 10.59 12 7 8.41 8.41 7 12 10.59 15.59 7 17 8.41 13.41 12 17 15.59z" fill="#aaa"/></svg>
<div class="a" style="left:804.6px;top:171.00px;font-size:12.3px;line-height:12.3px;font-weight:400;color:#333;letter-spacing:-0.386px;-webkit-text-stroke:0.35px #333;">ERRORS</div>
<svg class="a" style="left:858.3px;top:169px;" width="15" height="15" viewBox="0 0 15 15"><circle cx="7.5" cy="7.5" r="7.5" fill="#bdbdbd"/><text x="7.5" y="11.8" text-anchor="middle" font-family="Liberation Sans" font-size="11" font-weight="700" fill="#fff">0</text></svg>
<svg class="a" style="left:887.12px;top:166.34px;" width="18.76" height="18.76" viewBox="0 0 24 24"><path d="M1 21h22L12 2 1 21zm12-3h-2v-2h2v2zm0-4h-2v-4h2v4z" fill="#aaa"/></svg>
<div class="a" style="left:906.9px;top:171.00px;font-size:12.3px;line-height:12.3px;font-weight:400;color:#333;letter-spacing:0.307px;-webkit-text-stroke:0.35px #333;">WARNINGS</div>
<svg class="a" style="left:980.2px;top:169px;" width="15" height="15" viewBox="0 0 15 15"><circle cx="7.5" cy="7.5" r="7.5" fill="#bdbdbd"/><text x="7.5" y="11.8" text-anchor="middle" font-family="Liberation Sans" font-size="11" font-weight="700" fill="#fff">0</text></svg>
<svg class="a" style="left:1009.22px;top:166.34px;" width="18.76" height="18.76" viewBox="0 0 24 24"><path d="M1 21h22L12 2 1 21zm12-3h-2v-2h2v2zm0-4h-2v-4h2v4z" fill="#aaa"/></svg>
<div class="a" style="left:1028.5px;top:171.00px;font-size:12.3px;line-height:12.3px;font-weight:400;color:#333;letter-spacing:-0.166px;-webkit-text-stroke:0.35px #333;">SUPPRESSED</div>
<svg class="a" style="left:1114.9px;top:169px;" width="15" height="15" viewBox="0 0 15 15"><circle cx="7.5" cy="7.5" r="7.5" fill="#bdbdbd"/><text x="7.5" y="11.8" text-anchor="middle" font-family="Liberation Sans" font-size="11" font-weight="700" fill="#fff">0</text></svg>
<svg class="a" style="left:1143.78px;top:166.38px;" width="19.44" height="19.44" viewBox="0 0 24 24"><path d="M11 7h2v2h-2zm0 4h2v6h-2zm1-9C6.48 2 2 6.48 2 12s4.48 10 10 10 10-4.48 10-10S17.52 2 12 2zm0 18c-4.41 0-8-3.59-8-8s3.59-8 8-8 8 3.59 8 8-3.59 8-8 8z" fill="#007c8c"/></svg>
<div class="a" style="left:1163px;top:171.00px;font-size:12.3px;line-height:12.3px;font-weight:400;color:#333;letter-spacing:0.426px;-webkit-text-stroke:0.35px #333;">INFOS</div>
<svg class="a" style="left:1205px;top:169px;" width="15" height="15" viewBox="0 0 15 15"><circle cx="7.5" cy="7.5" r="7.5" fill="#bdbdbd"/><text x="7.5" y="11.8" text-anchor="middle" font-family="Liberation Sans" font-size="11" font-weight="700" fill="#fff">1</text></svg>
<div class="a" style="left:778px;top:195px;width:449px;height:1px;background:#e0e0e0"></div>
<div class="a" style="left:794.5px;top:206.00px;font-size:13px;line-height:13px;font-weight:400;color:#333;letter-spacing:0.247px;-webkit-text-stroke:0.35px #333;">Location</div>
<svg class="a" style="left:849.6px;top:204.2px" width="18.2" height="18.7" viewBox="0 0 24 24" preserveAspectRatio="none"><path d="M16 17.01V10h-2v7.01h-3L15 21l4-4h-3zM9 3L5 7h3v7h2V7h3L9 3z" fill="#222"/></svg>
<div class="a" style="left:964.7px;top:206.00px;font-size:13px;line-height:13px;font-weight:400;color:#333;letter-spacing:0.102px;-webkit-text-stroke:0.35px #333;">Details</div>
<div class="a" style="left:778px;top:228px;width:482px;height:1px;background:#e0e0e0"></div>
<div class="a" style="left:774px;top:242px;width:494px;height:314px;background:#fff;border-radius:4px;box-shadow:0 1px 2px rgba(0,0,0,0.22),0 0 1px rgba(0,0,0,0.15)"></div>
<svg class="a" style="left:792.78px;top:252.84px;" width="23.04" height="23.04" viewBox="0 0 24 24"><path d="M9.4 16.6L4.8 12l4.6-4.6L8 6l-6 6 6 6 1.4-1.4zm5.2 0l4.6-4.6-4.6-4.6L16 6l6 6-6 6-1.4-1.4z" fill="#666"/></svg>
<div class="a" style="left:819px;top:257.00px;font-size:13px;line-height:13px;font-weight:400;color:#333;letter-spacing:-0.068px;">Generated Files</div>
<svg class="a" style="left:1204.2px;top:257px;" width="15" height="15" viewBox="0 0 15 15"><g fill="none" stroke="#666" stroke-width="1.9"><path d="M8.9 1H13.8V6.1M1.4 8.9V13.5H6.3"/><path d="M13.6 1.2L8.8 6M1.6 13.3L6.2 8.7"/></g></svg>
<svg class="a" style="left:1226.89px;top:255.39px;" width="19.71" height="19.71" viewBox="0 0 24 24"><path d="M19 6.41L17.59 5 12 10.59 6.41 5 5 6.41 10.59 12 5 17.59 6.41 19 12 13.41 17.59 19 19 17.59 13.41 12z" fill="#666"/></svg>
<div class="a" style="left:797.3px;top:288.00px;font-size:13px;line-height:13px;font-weight:400;color:#333;letter-spacing:0.077px;">Filter:</div>
<div class="a" style="left:836px;top:302px;width:415px;height:1px;background:#8a8a8a"></div>
<div class="a" style="left:836.8px;top:288.00px;font-size:13px;line-height:13px;font-weight:400;color:#212121;letter-spacing:0.198px;">all</div>
<svg class="a" style="left:1235px;top:292px;" width="10" height="5" viewBox="0 0 10 5"><path d="M0 0H9.5L4.75 5Z" fill="#707070"/></svg>
<div class="a" style="left:794.5px;top:317.00px;font-size:13px;line-height:13px;font-weight:400;color:#333;letter-spacing:0.050px;-webkit-text-stroke:0.35px #333;">File name</div>
<div class="a" style="left:1070.9px;top:317.00px;font-size:13px;line-height:13px;font-weight:400;color:#333;letter-spacing:0.101px;-webkit-text-stroke:0.35px #333;">Category</div>
<div class="a" style="left:1183.3px;top:317px;width:84.7px;overflow:hidden;white-space:nowrap;font-size:13px;line-height:13px;color:#333;letter-spacing:0.45px;-webkit-text-stroke:0.35px #333">Include in build</div>
<div class="a" style="left:778px;top:338px;width:490px;height:1px;background:#e0e0e0"></div>
<svg class="a" style="left:794.08px;top:347.19px;" width="21.75" height="21.75" viewBox="0 0 24 24"><path d="M14 2H6c-1.1 0-1.99.9-1.99 2L4 20c0 1.1.89 2 1.99 2H18c1.1 0 2-.9 2-2V8l-6-6zM6 20V4h7v5h5v11H6z" fill="#222"/></svg>
<div class="a" style="left:822.8px;top:353.00px;font-size:13px;line-height:13px;font-weight:400;color:#007c8c;letter-spacing:0.116px;">ti_msp_dl_config.c</div>
<div class="a" style="left:1070.9px;top:344.00px;font-size:13px;line-height:13px;font-weight:400;color:#333;letter-spacing:0.016px;">MSPM0</div>
<div class="a" style="left:1070.9px;top:363.00px;font-size:13px;line-height:13px;font-weight:400;color:#333;letter-spacing:-0.023px;">Driver Library</div>
<div class="a" style="left:1215px;top:356.3px;width:21px;height:9.4px;background:#80bdc6;border-radius:5px"></div>
<div class="a" style="left:1228px;top:353px;width:16px;height:16px;background:#007c8c;border-radius:8px;box-shadow:0 1px 1.5px rgba(0,0,0,0.3)"></div>
<svg class="a" style="left:794.08px;top:391.19px;" width="21.75" height="21.75" viewBox="0 0 24 24"><path d="M14 2H6c-1.1 0-1.99.9-1.99 2L4 20c0 1.1.89 2 1.99 2H18c1.1 0 2-.9 2-2V8l-6-6zM6 20V4h7v5h5v11H6z" fill="#222"/></svg>
<div class="a" style="left:822.8px;top:398.00px;font-size:13px;line-height:13px;font-weight:400;color:#007c8c;letter-spacing:0.075px;">ti_msp_dl_config.h</div>
<div class="a" style="left:1070.9px;top:389.00px;font-size:13px;line-height:13px;font-weight:400;color:#333;letter-spacing:0.016px;">MSPM0</div>
<div class="a" style="left:1070.9px;top:408.00px;font-size:13px;line-height:13px;font-weight:400;color:#333;letter-spacing:-0.023px;">Driver Library</div>
<div class="a" style="left:1215px;top:400.3px;width:21px;height:9.4px;background:#80bdc6;border-radius:5px"></div>
<div class="a" style="left:1228px;top:397px;width:16px;height:16px;background:#007c8c;border-radius:8px;box-shadow:0 1px 1.5px rgba(0,0,0,0.3)"></div>
<svg class="a" style="left:794.08px;top:435.19px;" width="21.75" height="21.75" viewBox="0 0 24 24"><path d="M14 2H6c-1.1 0-1.99.9-1.99 2L4 20c0 1.1.89 2 1.99 2H18c1.1 0 2-.9 2-2V8l-6-6zM6 20V4h7v5h5v11H6z" fill="#222"/></svg>
<div class="a" style="left:822.8px;top:442.00px;font-size:13px;line-height:13px;font-weight:400;color:#007c8c;letter-spacing:-0.026px;">Event.dot</div>
<div class="a" style="left:1070.9px;top:433.00px;font-size:13px;line-height:13px;font-weight:400;color:#333;letter-spacing:0.016px;">MSPM0</div>
<div class="a" style="left:1070.9px;top:452.00px;font-size:13px;line-height:13px;font-weight:400;color:#333;letter-spacing:-0.023px;">Driver Library</div>
<div class="a" style="left:1215px;top:444.3px;width:21px;height:9.4px;background:#80bdc6;border-radius:5px"></div>
<div class="a" style="left:1228px;top:441px;width:16px;height:16px;background:#007c8c;border-radius:8px;box-shadow:0 1px 1.5px rgba(0,0,0,0.3)"></div>
<svg class="a" style="left:794.08px;top:479.19px;" width="21.75" height="21.75" viewBox="0 0 24 24"><path d="M14 2H6c-1.1 0-1.99.9-1.99 2L4 20c0 1.1.89 2 1.99 2H18c1.1 0 2-.9 2-2V8l-6-6zM6 20V4h7v5h5v11H6z" fill="#222"/></svg>
<div class="a" style="left:822.6px;top:486.00px;font-size:13px;line-height:13px;font-weight:400;color:#007c8c;letter-spacing:0.146px;">uart_echo_interrupts_standby.syscfg</div>
<div class="a" style="left:1070.9px;top:477.00px;font-size:13px;line-height:13px;font-weight:400;color:#333;letter-spacing:0.222px;">Configuration</div>
<div class="a" style="left:1070.9px;top:496.00px;font-size:13px;line-height:13px;font-weight:400;color:#333;letter-spacing:0.195px;">Script</div>
<div class="a" style="left:778px;top:382px;width:490px;height:1px;background:#e0e0e0"></div>
<div class="a" style="left:778px;top:426px;width:490px;height:1px;background:#e0e0e0"></div>
<div class="a" style="left:778px;top:471px;width:490px;height:1px;background:#e0e0e0"></div>
<div class="a" style="left:778px;top:515px;width:490px;height:1px;background:#e0e0e0"></div>
<div class="a" style="left:794.5px;top:521.00px;font-size:13px;line-height:13px;font-weight:400;color:#333;letter-spacing:0.134px;">4 Total Files</div>
<div class="a" style="left:778px;top:541px;width:490px;height:1px;background:#e0e0e0"></div>
<div class="a" style="left:774px;top:546px;width:446px;height:10px;background:#e3e3e3;border-bottom-left-radius:4px"></div>
<div class="a" style="left:816px;top:341px;width:123px;height:37px;border:4px solid #ec1c24;border-radius:2px;box-sizing:border-box"></div>
<div class="a" style="left:815.5px;top:388.5px;width:124.5px;height:31px;border:4px solid #ec1c24;border-radius:2px;box-sizing:border-box"></div>
<svg class="a" style="left:900px;top:280px;" width="140" height="130" viewBox="0 0 140 130"><g stroke="#ec1c24" stroke-width="4.6" stroke-linecap="round" fill="none"><path d="M113.7 13.8L46 66"/><path d="M125 61.6L48 115"/></g><path d="M36.8 73.7L47.8 53.3L49.5 63.5L59.4 69.6Z" fill="#ec1c24"/><path d="M38.3 122L51.6 102L51.5 112.5L62.4 117.4Z" fill="#ec1c24"/></svg>
<div class="a" style="left:774px;top:566px;width:494px;height:300px;background:#fff;border-radius:4px;box-shadow:0 1px 2px rgba(0,0,0,0.22),0 0 1px rgba(0,0,0,0.15)"></div>
<svg class="a" style="left:793.18px;top:601.45px;" width="22.56" height="22.56" viewBox="0 0 24 24"><path d="M15 9H9v6h6V9zm-2 4h-2v-2h2v2zm8-2V9h-2V7c0-1.1-.9-2-2-2h-2V3h-2v2h-2V3H9v2H7c-1.1 0-2 .9-2 2v2H3v2h2v2H3v2h2v2c0 1.1.9 2 2 2h2v2h2v-2h2v2h2v-2h2c1.1 0 2-.9 2-2v-2h2v-2h-2v-2h2zm-4 6H7V7h10v10z" fill="#666"/></svg>
<div class="a" style="left:816.2px;top:577.00px;font-size:13px;line-height:13px;font-weight:400;color:#333;letter-spacing:-0.044px;">MSPM0L130X</div>
<div class="a" style="left:816.2px;top:596.00px;font-size:13px;line-height:13px;font-weight:400;color:#333;letter-spacing:-0.106px;">(Device)</div>
<div class="a" style="left:816.2px;top:614.00px;font-size:13px;line-height:13px;font-weight:400;color:#333;letter-spacing:-0.400px;">VQFN-32(RHB)</div>
<div class="a" style="left:816.2px;top:633.00px;font-size:13px;line-height:13px;font-weight:400;color:#333;letter-spacing:-0.029px;">(Package)</div>
<svg class="a" style="left:1204.2px;top:605px;" width="15" height="15" viewBox="0 0 15 15"><g fill="none" stroke="#666" stroke-width="1.9"><path d="M8.9 1H13.8V6.1M1.4 8.9V13.5H6.3"/><path d="M13.6 1.2L8.8 6M1.6 13.3L6.2 8.7"/></g></svg>
<svg class="a" style="left:1226.89px;top:602.89px;" width="19.71" height="19.71" viewBox="0 0 24 24"><path d="M19 6.41L17.59 5 12 10.59 6.41 5 5 6.41 10.59 12 5 17.59 6.41 19 12 13.41 17.59 19 19 17.59 13.41 12z" fill="#666"/></svg>
<div class="a" style="left:1113px;top:656px;width:64px;height:28px;border:1px solid #5ea9b3;border-radius:2px;box-sizing:border-box"></div>
<div class="a" style="left:1121.7px;top:664.00px;font-size:12px;line-height:12px;font-weight:400;color:#007c8c;letter-spacing:-0.096px;-webkit-text-stroke:0.35px #007c8c;">SWITCH</div>
<svg class="a" style="left:774px;top:655px;" width="240" height="173" viewBox="0 0 240 173"><rect x="50" y="14" width="166" height="200" rx="5" fill="none" stroke="#666" stroke-width="2"/><circle cx="73" cy="37.2" r="5.8" fill="none" stroke="#222" stroke-width="2"/><rect x="87" y="1" width="8" height="13" fill="#800000"/><text transform="translate(96.6,26.5) rotate(-90)" font-family="Liberation Sans" font-size="11.6" fill="#444">32</text><text transform="translate(96.6,168.5) rotate(-90)" font-family="Liberation Sans" font-size="11.6" fill="#444">9</text><rect x="99" y="1" width="8" height="13" fill="#666"/><text transform="translate(108.6,26.5) rotate(-90)" font-family="Liberation Sans" font-size="11.6" fill="#444">31</text><text transform="translate(108.6,168.5) rotate(-90)" font-family="Liberation Sans" font-size="11.6" fill="#444">10</text><rect x="111" y="1" width="8" height="13" fill="#666"/><text transform="translate(120.6,26.5) rotate(-90)" font-family="Liberation Sans" font-size="11.6" fill="#444">30</text><text transform="translate(120.6,168.5) rotate(-90)" font-family="Liberation Sans" font-size="11.6" fill="#444">11</text><rect x="123" y="1" width="8" height="13" fill="#666"/><text transform="translate(132.6,26.5) rotate(-90)" font-family="Liberation Sans" font-size="11.6" fill="#444">29</text><text transform="translate(132.6,168.5) rotate(-90)" font-family="Liberation Sans" font-size="11.6" fill="#444">12</text><rect x="135" y="1" width="8" height="13" fill="#666"/><text transform="translate(144.6,26.5) rotate(-90)" font-family="Liberation Sans" font-size="11.6" fill="#444">28</text><text transform="translate(144.6,168.5) rotate(-90)" font-family="Liberation Sans" font-size="11.6" fill="#444">13</text><rect x="147" y="1" width="8" height="13" fill="#666"/><text transform="translate(156.6,26.5) rotate(-90)" font-family="Liberation Sans" font-size="11.6" fill="#444">27</text><text transform="translate(156.6,168.5) rotate(-90)" font-family="Liberation Sans" font-size="11.6" fill="#444">14</text><rect x="159" y="1" width="8" height="13" fill="#666"/><text transform="translate(168.6,26.5) rotate(-90)" font-family="Liberation Sans" font-size="11.6" fill="#444">26</text><text transform="translate(168.6,168.5) rotate(-90)" font-family="Liberation Sans" font-size="11.6" fill="#444">15</text><rect x="171" y="1" width="8" height="13" fill="#666"/><text transform="translate(180.6,26.5) rotate(-90)" font-family="Liberation Sans" font-size="11.6" fill="#444">25</text><text transform="translate(180.6,168.5) rotate(-90)" font-family="Liberation Sans" font-size="11.6" fill="#444">16</text><rect x="37" y="51.0" width="13" height="8" fill="#4caf50"/><text x="51.7" y="60.6" font-family="Liberation Sans" font-size="12" fill="#444">1</text><rect x="216" y="51.0" width="14" height="8" fill="#4caf50"/><text x="212.5" y="60.6" text-anchor="end" font-family="Liberation Sans" font-size="12" fill="#444">24</text><rect x="37" y="63.1" width="13" height="8" fill="#4caf50"/><text x="51.7" y="72.7" font-family="Liberation Sans" font-size="12" fill="#444">2</text><rect x="216" y="63.1" width="14" height="8" fill="#4caf50"/><text x="212.5" y="72.7" text-anchor="end" font-family="Liberation Sans" font-size="12" fill="#444">23</text><rect x="37" y="75.2" width="13" height="8" fill="#cccccc"/><text x="51.7" y="84.8" font-family="Liberation Sans" font-size="12" fill="#444">3</text><rect x="216" y="75.2" width="14" height="8" fill="#666"/><text x="212.5" y="84.8" text-anchor="end" font-family="Liberation Sans" font-size="12" fill="#444">22</text><rect x="37" y="87.3" width="13" height="8" fill="#800000"/><text x="51.7" y="96.9" font-family="Liberation Sans" font-size="12" fill="#444">4</text><rect x="216" y="87.3" width="14" height="8" fill="#666"/><text x="212.5" y="96.9" text-anchor="end" font-family="Liberation Sans" font-size="12" fill="#444">21</text><rect x="37" y="99.4" width="13" height="8" fill="#000000"/><text x="51.7" y="109.0" font-family="Liberation Sans" font-size="12" fill="#444">5</text><rect x="216" y="99.4" width="14" height="8" fill="#666"/><text x="212.5" y="109.0" text-anchor="end" font-family="Liberation Sans" font-size="12" fill="#444">20</text><rect x="37" y="111.5" width="13" height="8" fill="#666"/><text x="51.7" y="121.1" font-family="Liberation Sans" font-size="12" fill="#444">6</text><rect x="216" y="111.5" width="14" height="8" fill="#666"/><text x="212.5" y="121.1" text-anchor="end" font-family="Liberation Sans" font-size="12" fill="#444">19</text><rect x="37" y="123.6" width="13" height="8" fill="#666"/><text x="51.7" y="133.2" font-family="Liberation Sans" font-size="12" fill="#444">7</text><rect x="216" y="123.6" width="14" height="8" fill="#666"/><text x="212.5" y="133.2" text-anchor="end" font-family="Liberation Sans" font-size="12" fill="#444">18</text><rect x="37" y="135.7" width="13" height="8" fill="#666"/><text x="51.7" y="145.3" font-family="Liberation Sans" font-size="12" fill="#444">8</text><rect x="216" y="135.7" width="14" height="8" fill="#666"/><text x="212.5" y="145.3" text-anchor="end" font-family="Liberation Sans" font-size="12" fill="#444">17</text></svg>
<div class="a" style="left:1062.6px;top:707.00px;font-size:15px;line-height:15px;font-weight:400;color:#333;letter-spacing:0.071px;">Pin Available</div>
<div class="a" style="left:1182px;top:712px;width:12px;height:6px;background:#666"></div>
<div class="a" style="left:1062.6px;top:736.00px;font-size:15px;line-height:15px;font-weight:400;color:#333;letter-spacing:0.076px;">Pin Assigned</div>
<div class="a" style="left:1182px;top:741px;width:12px;height:6px;background:#4caf50"></div>
<div class="a" style="left:1062.6px;top:765.00px;font-size:15px;line-height:15px;font-weight:400;color:#333;letter-spacing:0.001px;">Warning</div>
<div class="a" style="left:1182px;top:770px;width:12px;height:6px;background:#ffa000"></div>
<div class="a" style="left:1062.6px;top:795.00px;font-size:15px;line-height:15px;font-weight:400;color:#333;letter-spacing:-0.026px;">Power</div>
<div class="a" style="left:1182px;top:800px;width:12px;height:6px;background:#800000"></div>
<div class="a" style="left:1062.6px;top:824.00px;font-size:15px;line-height:15px;font-weight:400;color:#333;">Ground</div>
<div class="a" style="left:1182px;top:829px;width:12px;height:6px;background:#000"></div>
<div class="a" style="left:1046px;top:729px;width:184px;height:1px;background:#e0e0e0"></div>
<div class="a" style="left:1046px;top:758px;width:184px;height:1px;background:#e0e0e0"></div>
<div class="a" style="left:1046px;top:788px;width:184px;height:1px;background:#e0e0e0"></div>
<div class="a" style="left:1046px;top:817px;width:184px;height:1px;background:#e0e0e0"></div>
</body></html>
